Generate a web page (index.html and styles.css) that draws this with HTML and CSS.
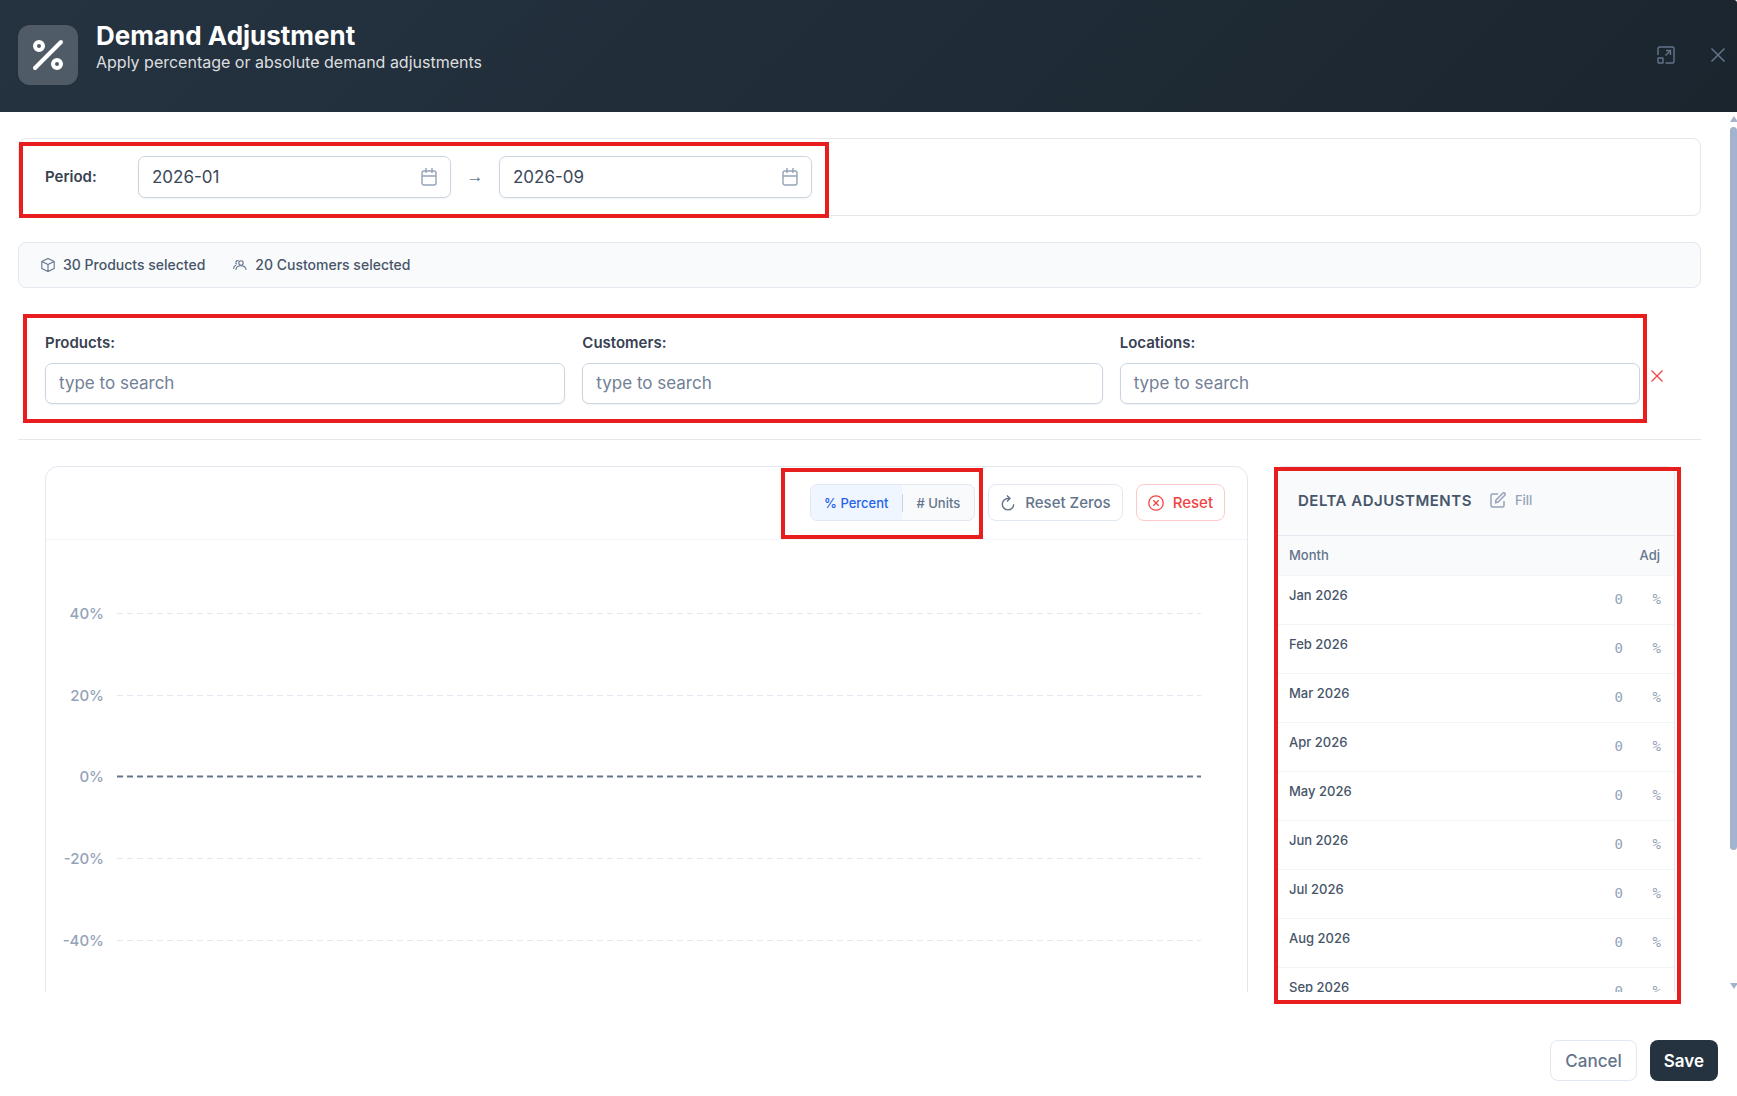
FILE: index.html
```html
<!DOCTYPE html>
<html lang="en">
<head>
  <meta charset="UTF-8" />
  <meta name="viewport" content="width=device-width, initial-scale=1.0" />
  <title>Demand Adjustment</title>
  <link rel="stylesheet" href="styles.css">
</head>
<body>
  <header class="header">
    <div class="header-icon">
      <svg width="32" height="32" viewBox="0 0 32 32" fill="none" stroke="#fff" stroke-width="4" stroke-linecap="round">
        <path d="M3 29 29 3" />
        <circle cx="7" cy="7" r="4" />
        <circle cx="25" cy="25" r="4" />
      </svg>
    </div>
    <div class="header-text">
      <h1>Demand Adjustment</h1>
      <p>Apply percentage or absolute demand adjustments</p>
    </div>
    <div class="header-actions">
      <button aria-label="Maximize">
        <svg width="18" height="18" viewBox="0 0 18 18" fill="none" stroke="currentColor" stroke-width="1.4">
          <path d="M1 9V2.5Q1 1 2.5 1h13Q17 1 17 2.5v13q0 1.500-1.500 1.500H8.500" />
          <rect x="1" y="12" width="5" height="5" rx="0.500" />
          <path d="M8.500 9.500 13.500 4.500M9 4.500h4.500V9" />
        </svg>
      </button>
      <button aria-label="Close">
        <svg width="16" height="16" viewBox="0 0 16 16" fill="none" stroke="currentColor" stroke-width="1.500">
          <path d="M1.500 1.500l13 13M14.500 1.500l-13 13" />
        </svg>
      </button>
    </div>
  </header>

  <div class="body">
    <main class="content">
      <section class="period">
        <label for="from">Period:</label>
        <div class="date">
          <input type="text" id="from" value="2026-01" />
          <svg width="16" height="18" viewBox="0 0 16 18" fill="none" stroke="currentColor" stroke-width="1.400">
            <rect x="1" y="3" width="14" height="14" rx="2" />
            <path d="M1 8h14M5 0v5M11 0v5" />
          </svg>
        </div>
        <span class="arrow">→</span>
        <div class="date">
          <input type="text" id="to" value="2026-09" aria-label="Period end" />
          <svg width="16" height="18" viewBox="0 0 16 18" fill="none" stroke="currentColor" stroke-width="1.400">
            <rect x="1" y="3" width="14" height="14" rx="2" />
            <path d="M1 8h14M5 0v5M11 0v5" />
          </svg>
        </div>
      </section>

      <section class="selected">
        <span class="chip">
          <svg width="14" height="14" viewBox="0 0 14 14" fill="none" stroke="currentColor" stroke-width="1.100" stroke-linejoin="round">
            <path d="M7 .6 13.200 3.500v7L7 13.400.8 10.500v-7zM.8 3.500 7 6.500l6.200-3M7 6.500v6.900" />
          </svg>
          30 Products selected
        </span>
        <span class="chip">
          <svg width="14" height="14" viewBox="0 0 14 14" fill="none" stroke="currentColor" stroke-width="1.100" stroke-linecap="round">
            <circle cx="8" cy="5" r="2.200" />
            <path d="M3 11.500c.4-5 9.600-5 10 0M5.200 2.700a1.900 1.900 0 0 0-1.700 3.300M.7 10.500c0-1.800.7-2.800 2-3.300M10.500 8.300l1.500 1" />
          </svg>
          20 Customers selected
        </span>
      </section>

      <section class="search">
        <div class="field">
          <label for="products">Products:</label>
          <input type="text" id="products" placeholder="type to search" />
        </div>
        <div class="field">
          <label for="customers">Customers:</label>
          <input type="text" id="customers" placeholder="type to search" />
        </div>
        <div class="field">
          <label for="locations">Locations:</label>
          <input type="text" id="locations" placeholder="type to search" />
        </div>
        <button class="clear" aria-label="Clear filters">
          <svg width="12" height="12" viewBox="0 0 12 12" fill="none" stroke="currentColor" stroke-width="1.300">
            <path d="M.5.5l11 11M11.500.5l-11 11" />
          </svg>
        </button>
      </section>

      <section class="workspace">
        <div class="card">
          <div class="toolbar">
            <div class="toggle">
              <button class="active">% Percent</button>
              <button># Units</button>
            </div>
            <button class="btn">
              <svg width="16" height="16" viewBox="0 0 16 16" fill="none" stroke="currentColor" stroke-width="1.400">
                <path d="M9 3.500H7.500a5.700 5.700 0 1 0 6.200 5.700M7 .5l3 3-3 3" />
              </svg>
              Reset Zeros
            </button>
            <button class="btn danger">
              <svg width="16" height="16" viewBox="0 0 16 16" fill="none" stroke="currentColor" stroke-width="1.300">
                <circle cx="8" cy="8" r="7.200" />
                <path d="M5.300 5.300l5.400 5.400M10.700 5.300l-5.400 5.400" />
              </svg>
              Reset
            </button>
          </div>
          <div class="chart" id="chart"></div>
        </div>

        <aside class="delta">
          <div class="delta-head">
            <h2>DELTA ADJUSTMENTS</h2>
            <button class="fill">
              <svg width="16" height="16" viewBox="0 0 16 16" fill="none" stroke="currentColor" stroke-width="1.500" stroke-linejoin="round">
                <path d="M8 2H2.500Q1 2 1 3.500v10Q1 15 2.500 15h10q1.500 0 1.500-1.500V9" />
                <path d="M5.500 10.800 6 8 13 1q1-.6 1.800.2T15 3L8.200 10z" />
              </svg>
              Fill
            </button>
          </div>
          <table>
            <thead>
              <tr><th>Month</th><th class="right">Adj</th></tr>
            </thead>
            <tbody id="months"></tbody>
          </table>
        </aside>
      </section>
    </main>

    <div class="scrollbar">
      <svg width="8" height="6" viewBox="0 0 8 6"><path d="M4 0 8 6H0z" fill="#a3b3cb" /></svg>
      <div class="track"><div class="thumb"></div></div>
      <svg width="8" height="6" viewBox="0 0 8 6"><path d="M0 0h8L4 6z" fill="#a3b3cb" /></svg>
    </div>
  </div>

  <footer class="footer">
    <button class="cancel">Cancel</button>
    <button class="save">Save</button>
  </footer>

  <div class="mark mark-period"></div>
  <div class="mark mark-search"></div>
  <div class="mark mark-toggle"></div>
  <div class="mark mark-delta"></div>

  <script>
    const months = ["Jan", "Feb", "Mar", "Apr", "May", "Jun", "Jul", "Aug", "Sep"];
    const ticks = [40, 20, 0, -20, -40];

    document.getElementById("months").innerHTML = months.map(m => `
      <tr>
        <td>${m} 2026</td>
        <td class="adj"><input type="text" value="0" aria-label="${m} 2026 adjustment" /><span>%</span></td>
      </tr>
    `).join("");

    document.getElementById("chart").innerHTML = ticks.map(t => `
      <div class="tick ${t === 0 ? 'zero' : ''}">
        <span>${t}%</span>
        <svg height="3"><line x1="0" y1="1.5" x2="100%" y2="1.5" /></svg>
      </div>
    `).join("");
  </script>
</body>
</html>
```
FILE: styles.css
```css
* {
  box-sizing: border-box;
}
body {
  font-family: Inter, "Liberation Sans", sans-serif;
  margin: 0;
  height: 100vh;
  background: #fff;
  color: #475569;
  display: flex;
  flex-direction: column;
  position: relative;
  overflow: hidden;
}
button, input {
  font-family: inherit;
}
button {
  padding: 0;
  border: 0;
  background: none;
  white-space: nowrap;
}
svg {
  flex-shrink: 0;
}

/* header */
.header {
  height: 112px;
  flex-shrink: 0;
  padding: 0 11px 2px 18px;
  display: flex;
  align-items: center;
  gap: 18px;
  background: linear-gradient(135deg, #253341, #1b252e);
  border-top-right-radius: 3px;
  color: #fff;
}
.header-icon {
  width: 60px;
  height: 60px;
  border-radius: 12px;
  background: rgba(255,255,255,0.2);
  display: flex;
  align-items: center;
  justify-content: center;
}
.header-text {
  flex: 1;
  height: 64px;
}
.header-text h1 {
  margin: 0;
  font-size: 26px;
  line-height: 26px;
  font-weight: 700;
}
.header-text p {
  margin: 0;
  font-size: 16px;
  line-height: 26px;
  color: rgba(255,255,255,0.85);
}
.header-actions {
  display: flex;
  align-items: center;
  gap: 35px;
}
.header-actions button {
  display: flex;
  color: #64748b;
}

/* scroll area */
.body {
  flex: 1;
  min-height: 0;
  display: flex;
}
.content {
  flex: 1;
  overflow: hidden;
  padding: 26px 29px 0 18px;
}
.scrollbar {
  width: 7px;
  padding: 4px 0 3px;
  display: flex;
  flex-direction: column;
  align-items: center;
  gap: 5px;
}
.track {
  flex: 1;
  width: 100%;
}
.thumb {
  height: 85%;
  border-radius: 4px;
  background: #a3b3cb;
}

.period {
  height: 78px;
  padding: 0 26px;
  border: 1px solid #e5e7eb;
  border-radius: 8px;
  display: flex;
  align-items: center;
}
label {
  font-size: 15px;
  line-height: 20px;
  font-weight: 600;
  color: #374151;
}
.period label {
  width: 93px;
}
.date {
  position: relative;
  width: 313px;
}
.date input, .field input {
  width: 100%;
  height: 42px;
  padding: 0 13px;
  border: 1px solid #cbd5e1;
  border-radius: 7px;
  box-shadow: 0 1px 2px rgba(15,23,42,0.05);
  font-size: 17px;
  color: #3b4859;
  background: #fff;
}
.date svg {
  position: absolute;
  right: 14px;
  top: 12px;
  color: #94a3b8;
}
.arrow {
  width: 48px;
  text-align: center;
  font-family: "Liberation Sans", sans-serif;
  font-size: 17px;
  color: #64748b;
}

.selected {
  height: 46px;
  margin-top: 26px;
  padding: 0 22px 1px;
  border: 1px solid #e2e8f0;
  border-radius: 8px;
  background: #f8fafc;
  display: flex;
  align-items: center;
  gap: 28px;
}
.chip {
  display: flex;
  align-items: center;
  gap: 8px;
  font-size: 14px;
  font-weight: 500;
}
.chip svg {
  color: #64748b;
}

.search {
  padding: 45px 26px 35px 27px;
  border-bottom: 1px solid #e5e7eb;
  display: flex;
  gap: 17px;
}
.field {
  flex: 1;
  display: flex;
  flex-direction: column;
  gap: 10px;
}
.field input {
  height: 41px;
  padding-bottom: 2px;
}
.field input::placeholder {
  color: #718096;
}
.clear {
  width: 35px;
  margin-left: -17px;
  padding-top: 17px;
  color: #ef4444;
}

/* chart card */
.workspace {
  padding: 26px 26px 0 27px;
  display: flex;
  align-items: flex-start;
  gap: 27px;
}
.card {
  flex: 1;
  height: 620px;
  border: 1px solid #e2e8f0;
  border-radius: 13px;
}
.toolbar {
  height: 73px;
  padding: 0 22px 1px 0;
  border-bottom: 1px solid #f1f5f9;
  display: flex;
  align-items: center;
  justify-content: flex-end;
  gap: 13px;
}
.toggle {
  height: 37px;
  border: 1px solid #e2e8f0;
  border-radius: 7px;
  background: #f8fafc;
  display: flex;
  align-items: center;
  overflow: hidden;
}
.toggle button {
  height: 100%;
  padding: 0 14px 0 13px;
  font-size: 13px;
  font-weight: 500;
  color: #64748b;
}
.toggle .active {
  background: #eff6ff;
  color: #2563eb;
}
.toggle .active + button {
  height: 18px;
  border-left: 1px solid #cbd5e1;
}
.btn {
  height: 37px;
  padding: 0 11px;
  border: 1px solid #e2e8f0;
  border-radius: 8px;
  display: flex;
  align-items: center;
  gap: 9px;
  font-size: 15px;
  font-weight: 500;
  color: #64748b;
}
.danger {
  border-color: #fecaca;
  color: #ef4444;
}
.chart {
  height: 408px;
  margin-top: 33px;
  padding-right: 46px;
  display: grid;
  grid-template-rows: repeat(5, 1fr);
}
.tick {
  display: flex;
  align-items: center;
  gap: 13px;
}
.tick span {
  width: 58px;
  text-align: right;
  font-size: 15px;
  font-weight: 500;
  color: #94a3b8;
}
.tick svg {
  flex: 1;
}
.tick line {
  stroke: #e2e8f0;
  stroke-width: 1;
  stroke-dasharray: 6 4;
}
.zero line {
  stroke: #64748b;
  stroke-width: 2;
}

/* adjustments table */
.delta {
  width: 400px;
  border: 1px solid #e2e8f0;
  border-radius: 8px;
}
.delta-head {
  height: 69px;
  padding: 0 22px 2px;
  background: #f8fafc;
  border-bottom: 1px solid #e2e8f0;
  display: flex;
  align-items: center;
  gap: 18px;
}
.delta-head h2 {
  margin: 0;
  font-size: 15px;
  font-weight: 600;
  letter-spacing: 0.5px;
}
.fill {
  display: flex;
  align-items: center;
  gap: 9px;
  font-size: 13px;
  font-weight: 500;
  color: #94a3b8;
}
.delta table {
  width: 100%;
  border-collapse: separate;
  border-spacing: 0;
  font-size: 13px;
  font-weight: 500;
}
.delta th {
  height: 40px;
  padding: 0 14px 1px 13px;
  text-align: left;
  font-weight: 500;
  color: #64748b;
  background: #f8fafc;
  border-bottom: 1px solid #f1f5f9;
}
.delta .right {
  text-align: right;
}
.delta td {
  height: 49px;
  padding: 11px 13px 0;
  vertical-align: top;
  border-bottom: 1px solid #f1f5f9;
}
.delta .adj {
  padding-top: 15px;
  display: flex;
  justify-content: flex-end;
  font-family: "DejaVu Sans Mono", monospace;
  font-size: 14px;
  line-height: 16px;
  font-weight: 400;
  color: #94a3b8;
}
.adj input {
  width: 60px;
  height: 16px;
  padding: 0;
  border: 0;
  background: none;
  text-align: right;
  font-size: 14px;
  color: inherit;
}
.adj span {
  width: 38px;
  text-align: right;
}

.footer {
  height: 104px;
  flex-shrink: 0;
  padding: 48px 19px 0;
  display: flex;
  justify-content: flex-end;
  align-items: flex-start;
  gap: 13px;
}
.footer button {
  height: 41px;
  padding: 0 14px;
  border-radius: 8px;
  font-size: 17px;
}
.footer .cancel {
  border: 1px solid #e2e8f0;
  font-weight: 500;
  color: #64748b;
}
.footer .save {
  background: #253341;
  font-weight: 600;
  color: #fff;
}

/* red callout frames over the page */
.mark {
  position: absolute;
  border: 4px solid #e81e1e;
  pointer-events: none;
}
.mark-period {
  left: 19px;
  top: 142px;
  width: 810px;
  height: 76px;
}
.mark-search {
  left: 23px;
  top: 314px;
  width: 1624px;
  height: 109px;
}
.mark-toggle {
  left: 781px;
  top: 468px;
  width: 202px;
  height: 71px;
}
.mark-delta {
  left: 1274px;
  top: 467px;
  width: 407px;
  height: 537px;
}
```
